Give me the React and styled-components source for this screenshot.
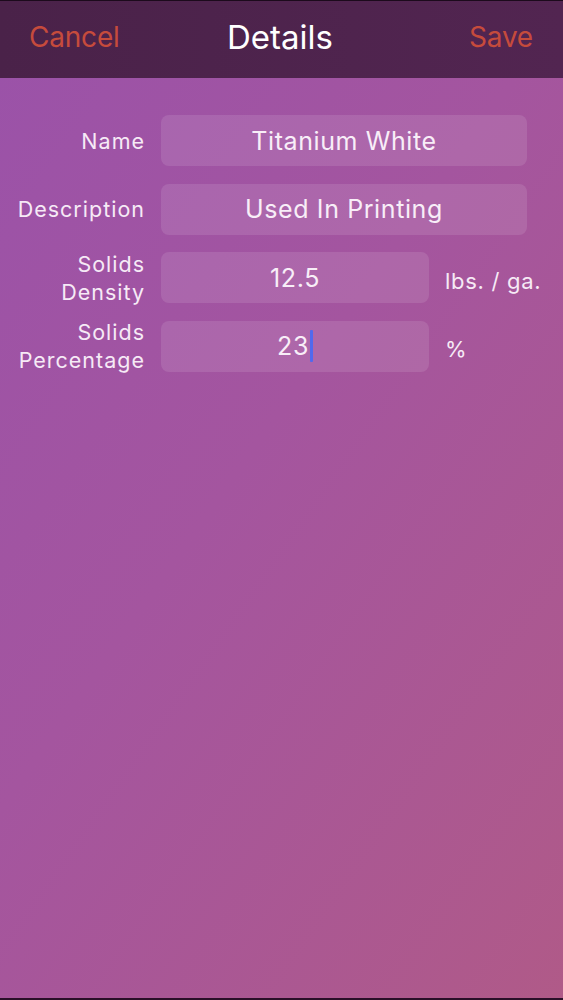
import styled, { createGlobalStyle } from 'styled-components';

const Global = createGlobalStyle`
  html, body { margin: 0; padding: 0; }
  body {
    font-family: Inter, "Liberation Sans", sans-serif;
    background: #a556a0;
  }
`;

const Page = styled.div`
  min-height: 1000px;
  display: flex;
  flex-direction: column;
  background: linear-gradient(125deg, #9a52a9 0%, #a4559f 45%, #b05a88 100%);
  border-top: 1px solid #1c0a1c;
  border-bottom: 2px solid #2a1028;
  box-sizing: border-box;
`;

const Bar = styled.div`
  height: 77px;
  display: grid;
  grid-template-columns: 1fr auto 1fr;
  align-items: center;
  padding: 0 30px 6px 29px;
  box-sizing: border-box;
  background: linear-gradient(90deg, #4a2249, #522551);
`;

const BarButton = styled.span`
  color: #c64b3c;
  font-size: 28px;
  letter-spacing: -0.2px;
  justify-self: ${p => (p.$end ? 'end' : 'start')};
`;

const Title = styled.span`
  color: #fff;
  font-size: 33px;
  margin-left: -2px;
`;

const Form = styled.div`
  display: grid;
  grid-template-columns: 145px 268px minmax(0, 1fr);
  grid-auto-rows: 51px;
  column-gap: 16px;
  row-gap: 17.5px;
  padding: 37px 36px 0 0;
`;

const Label = styled.div`
  color: #f6eaf6;
  font-size: 21.5px;
  letter-spacing: 1px;
  line-height: 28px;
  text-align: right;
  align-self: center;
  white-space: nowrap;
`;

const Field = styled.div`
  grid-column: ${p => (p.$wide ? '2 / 4' : '2 / 3')};
  display: flex;
  align-items: center;
  justify-content: center;
  border-radius: 8px;
  background: rgba(255, 255, 255, 0.11);
  color: #f8eef8;
  font-size: 25px;
  letter-spacing: 0.6px;
`;

const Cursor = styled.span`
  display: inline-block;
  width: 3px;
  height: 32px;
  margin-left: 1px;
  border-radius: 1px;
  background: #5169ee;
`;

const Unit = styled.div`
  color: #f6eaf6;
  font-size: 22px;
  letter-spacing: 0.7px;
  align-self: center;
  white-space: nowrap;
  margin-top: ${p => p.$drop || 0}px;
`;

export default function App() {
  return (
    <>
      <Global />
      <Page>
        <Bar>
          <BarButton>Cancel</BarButton>
          <Title>Details</Title>
          <BarButton $end>Save</BarButton>
        </Bar>
        <Form>
          <Label>Name</Label>
          <Field $wide>Titanium White</Field>

          <Label>Description</Label>
          <Field $wide>Used In Printing</Field>

          <Label>Solids<br />Density</Label>
          <Field>12.5</Field>
          <Unit $drop={6}>lbs. / ga.</Unit>

          <Label>Solids<br />Percentage</Label>
          <Field>23<Cursor /></Field>
          <Unit $drop={6}>%</Unit>
        </Form>
      </Page>
    </>
  );
}
